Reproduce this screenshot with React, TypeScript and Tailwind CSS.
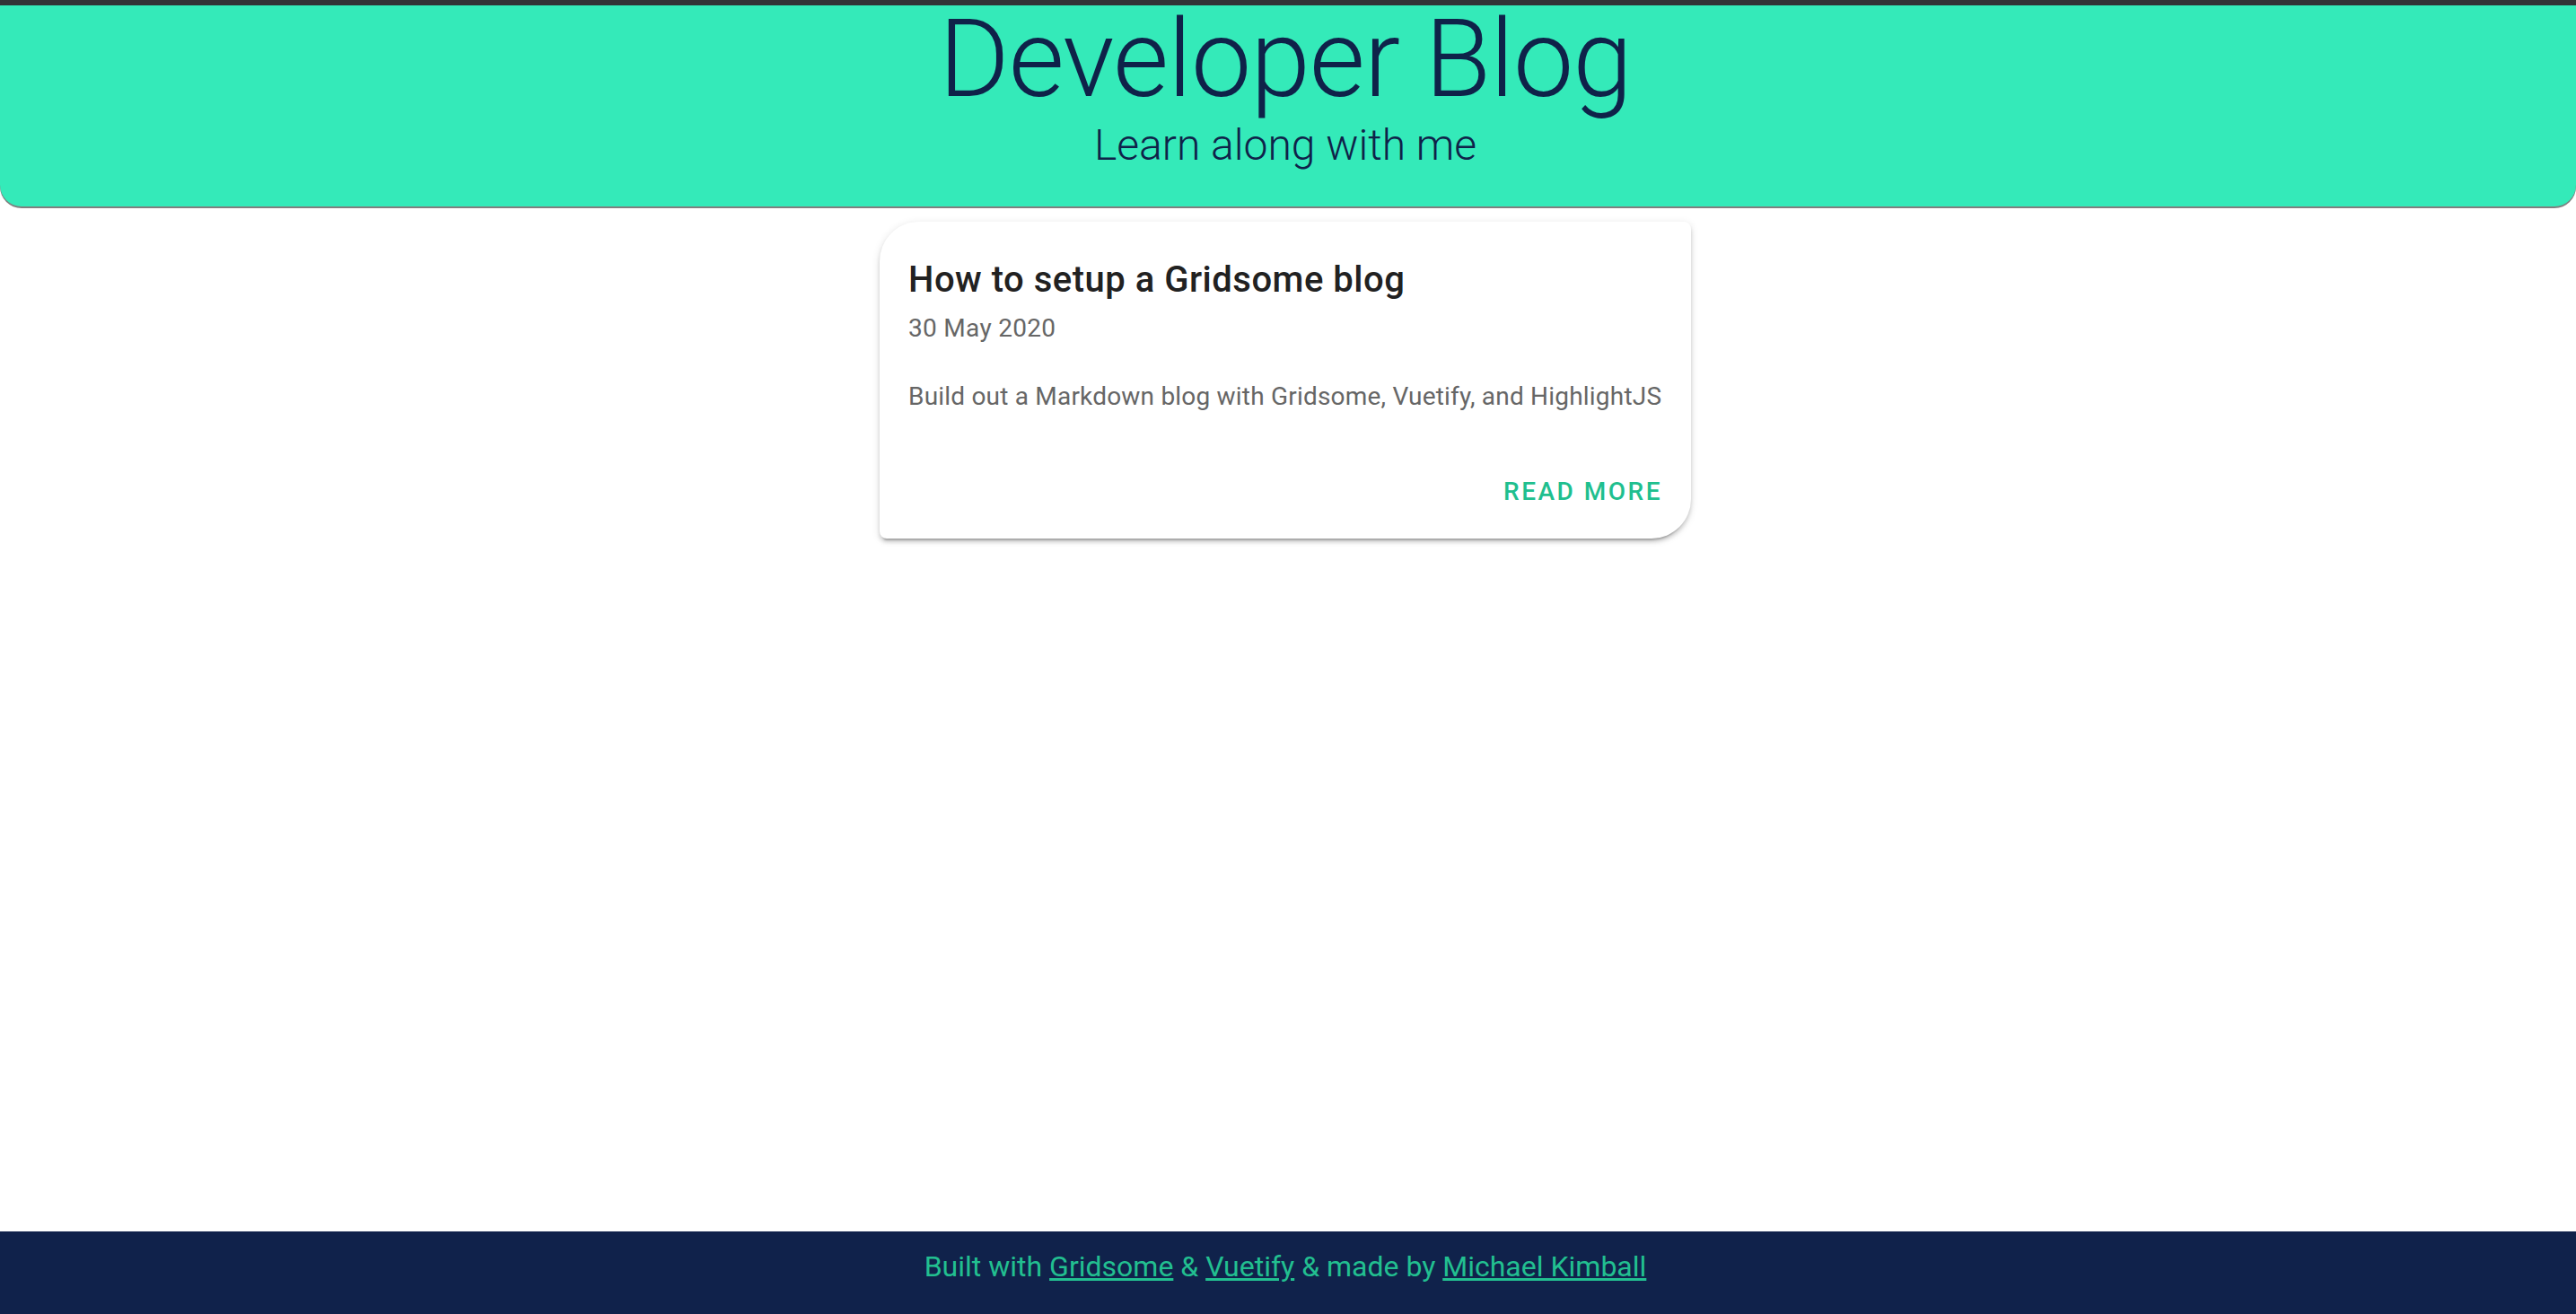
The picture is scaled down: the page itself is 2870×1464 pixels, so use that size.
export default function App() {
  return (
    <div className="min-h-screen flex flex-col bg-white font-['Roboto',sans-serif]">
      {/* top strip */}
      <div className="h-[6px] bg-[#323336]" />

      {/* header */}
      <header className="h-[224px] bg-[#34EAB9] rounded-b-[24px] shadow-[0_2px_0_0_rgba(0,0,0,0.5)] flex flex-col items-center pr-[6px] text-[#0F2249]">
        <h1 className="text-[120px] leading-[120px] font-light tracking-[-0.0083em]">
          Developer Blog
        </h1>
        <p className="mt-[4px] text-[48px] leading-[64px] font-light">
          Learn along with me
        </p>
      </header>

      {/* posts */}
      <main className="flex-1 flex flex-col items-center pt-[17px] pr-[6px]">
        <article className="w-[904px] bg-white rounded-tl-[44px] rounded-br-[44px] rounded-tr-[8px] rounded-bl-[8px] shadow-[0_6px_2px_-4px_rgba(0,0,0,0.2),0_4px_4px_0_rgba(0,0,0,0.14),0_2px_10px_0_rgba(0,0,0,0.12)] px-[32px] pt-[33px] pb-[30px]">
          <h2 className="text-[40px] leading-[64px] font-medium text-[#212121] tracking-[0.0125em]">
            How to setup a Gridsome blog
          </h2>
          <div className="text-[28px] leading-[44px] text-[#666666] tracking-[0.3px]">
            30 May 2020
          </div>
          <p className="mt-[32px] text-[28px] leading-[44px] text-[#666666] tracking-[0.2px] whitespace-nowrap">
            Build out a Markdown blog with Gridsome, Vuetify, and HighlightJS
          </p>
          <div className="mt-[62px] flex justify-end">
            <a className="text-[28px] leading-[44px] font-medium uppercase tracking-[0.0892em] text-[#1FBF8F] cursor-pointer">
              Read More
            </a>
          </div>
        </article>
      </main>

      {/* footer */}
      <footer className="h-[92px] bg-[#10224B] flex justify-center pt-[15px] pr-[6px]">
        <p className="text-[32px] leading-[48px] text-[#22BF90]">
          Built with <a className="underline">Gridsome</a> &amp;{" "}
          <a className="underline">Vuetify</a> &amp; made by{" "}
          <a className="underline">Michael Kimball</a>
        </p>
      </footer>
    </div>
  );
}
